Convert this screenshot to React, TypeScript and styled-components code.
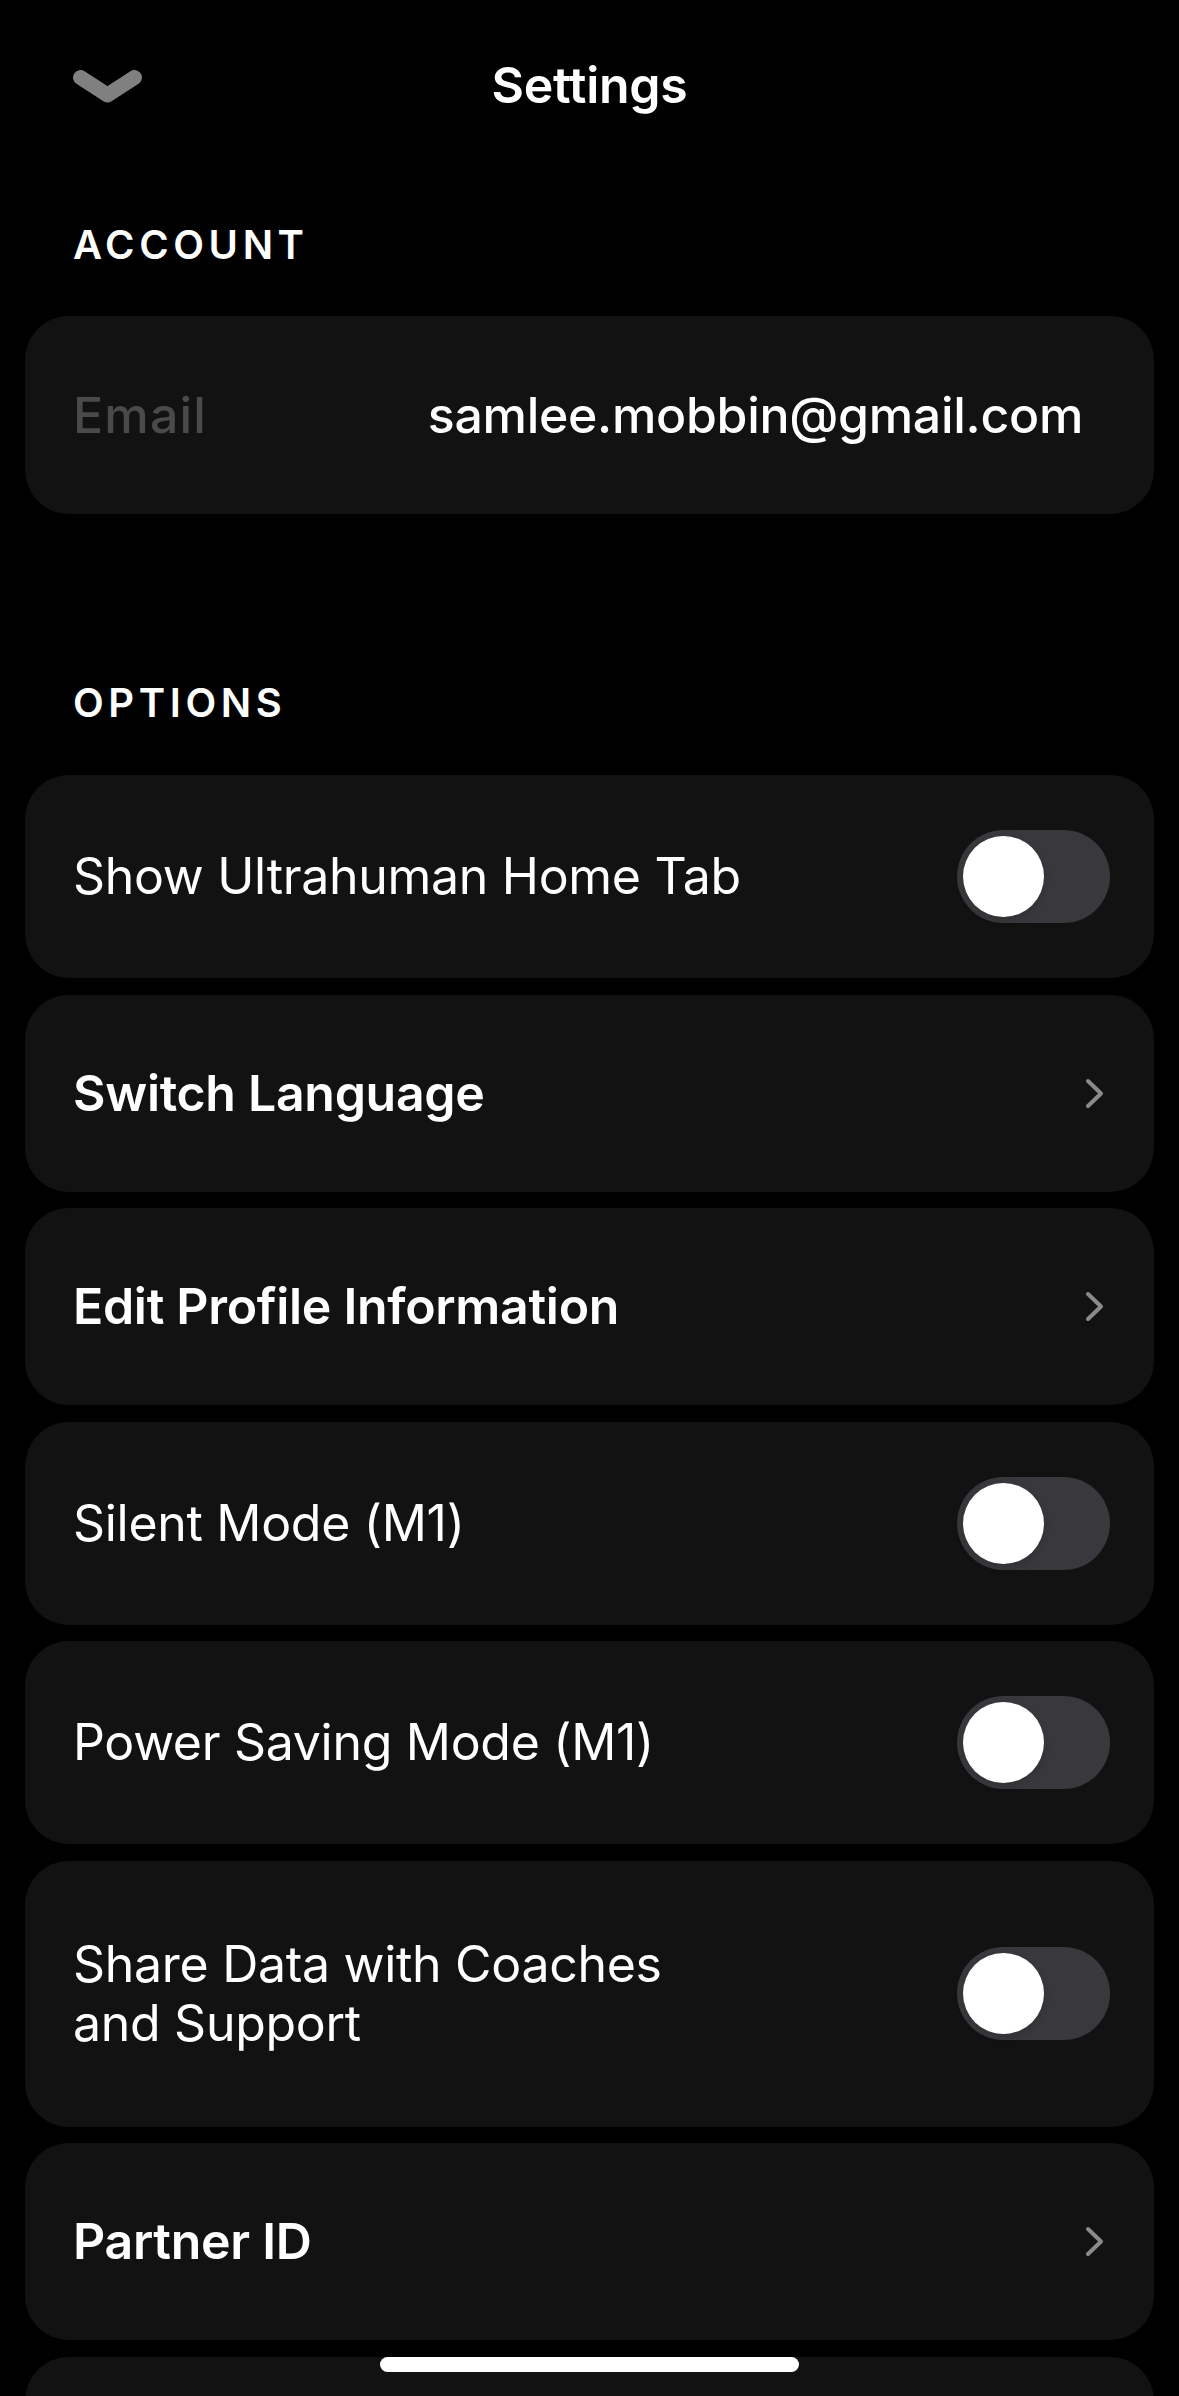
import React from "react";
import styled, { createGlobalStyle } from "styled-components";

const GlobalStyle = createGlobalStyle`
  html, body {
    margin: 0;
    padding: 0;
    background: #000;
  }
  body {
    font-family: Inter, "Noto Sans", "Liberation Sans", sans-serif;
    color: #fff;
    -webkit-font-smoothing: antialiased;
  }
`;

const Screen = styled.div`
  width: 1179px;
  min-height: 2396px;
  background: #000;
  display: flex;
  flex-direction: column;
  box-sizing: border-box;
  padding: 0 25px;
`;

const Header = styled.header`
  height: 170px;
  display: grid;
  grid-template-columns: 1fr auto 1fr;
  align-items: center;
  padding: 0 48px;
  box-sizing: border-box;
`;

const BackButton = styled.button`
  background: none;
  border: none;
  padding: 0;
  width: 69px;
  height: 34px;
  display: flex;
  align-items: center;
  margin-top: 4px;
`;

const Title = styled.h1`
  margin: 0;
  font-size: 50px;
  font-weight: 600;
  letter-spacing: -0.3px;
  color: #fff;
`;

const SectionLabel = styled.h2<{ $top: number }>`
  margin: ${({ $top }) => $top}px 0 0 48px;
  font-size: 40px;
  line-height: 48px;
  font-weight: 600;
  letter-spacing: 4.6px;
  text-transform: uppercase;
  color: #fff;
`;

const List = styled.div<{ $top: number }>`
  margin-top: ${({ $top }) => $top}px;
  display: flex;
  flex-direction: column;
  gap: 16.5px;
`;

const Card = styled.div<{ $padY: number }>`
  background: #121212;
  border-radius: 44px;
  padding: ${({ $padY }) => $padY}px 44px ${({ $padY }) => $padY}px 48px;
  display: flex;
  align-items: center;
  justify-content: space-between;
  gap: 24px;
`;

const FieldLabel = styled.span`
  font-size: 50px;
  line-height: 60px;
  font-weight: 500;
  color: #4a4a4c;
  letter-spacing: 1.2px;
`;

const FieldValue = styled.span`
  font-size: 50px;
  line-height: 60px;
  font-weight: 500;
  color: #fff;
  letter-spacing: -0.3px;
  margin-right: 27px;
`;

const RowText = styled.span<{ $bold?: boolean }>`
  font-size: 50px;
  line-height: 59px;
  font-weight: ${({ $bold }) => ($bold ? 600 : 400)};
  letter-spacing: -0.3px;
  color: #fff;
  white-space: pre-line;
`;

const Track = styled.div<{ $on?: boolean }>`
  flex: none;
  width: 153px;
  height: 93px;
  border-radius: 47px;
  background: ${({ $on }) => ($on ? "#34c759" : "#39393d")};
  padding: 6px;
  box-sizing: border-box;
  display: flex;
  justify-content: ${({ $on }) => ($on ? "flex-end" : "flex-start")};
`;

const Knob = styled.div`
  width: 81px;
  height: 81px;
  border-radius: 50%;
  background: #fff;
  box-shadow: 0 3px 8px rgba(0, 0, 0, 0.15);
`;

const ChevronBox = styled.div`
  flex: none;
  width: 19px;
  height: 31px;
  margin-right: 6px;
  display: flex;
`;

const HomeIndicator = styled.div`
  position: fixed;
  left: 380px;
  top: 2357px;
  width: 419px;
  height: 15px;
  border-radius: 8px;
  background: #fff;
`;

const ChevronDown = () => (
  <svg width="69" height="34" viewBox="0 0 69 34">
    <polyline
      points="7.5,7.5 34.5,25 61.5,7.5"
      fill="none"
      stroke="#808080"
      strokeWidth="15"
      strokeLinecap="round"
      strokeLinejoin="round"
    />
  </svg>
);

const ChevronRight = () => (
  <ChevronBox>
    <svg width="19" height="31" viewBox="0 0 19 31">
      <polyline
        points="3,3 16,15.5 3,28"
        fill="none"
        stroke="#8a8a8e"
        strokeWidth="4"
        strokeLinecap="round"
        strokeLinejoin="round"
      />
    </svg>
  </ChevronBox>
);

const Toggle: React.FC<{ on?: boolean }> = ({ on }) => (
  <Track $on={on}>
    <Knob />
  </Track>
);

type Option =
  | { kind: "toggle"; label: string; padY: number }
  | { kind: "link"; label: string };

const options: Option[] = [
  { kind: "toggle", label: "Show Ultrahuman Home Tab", padY: 55 },
  { kind: "link", label: "Switch Language" },
  { kind: "link", label: "Edit Profile Information" },
  { kind: "toggle", label: "Silent Mode (M1)", padY: 55 },
  { kind: "toggle", label: "Power Saving Mode (M1)", padY: 55 },
  { kind: "toggle", label: "Share Data with Coaches\nand Support", padY: 74 },
  { kind: "link", label: "Partner ID" },
  { kind: "link", label: "" },
];

const App: React.FC = () => (
  <>
    <GlobalStyle />
    <Screen>
      <Header>
        <BackButton aria-label="Close">
          <ChevronDown />
        </BackButton>
        <Title>Settings</Title>
        <span />
      </Header>

      <SectionLabel $top={51}>Account</SectionLabel>
      <List $top={47}>
        <Card $padY={69}>
          <FieldLabel>Email</FieldLabel>
          <FieldValue>samlee.mobbin@gmail.com</FieldValue>
        </Card>
      </List>

      <SectionLabel $top={165}>Options</SectionLabel>
      <List $top={48}>
        {options.map((o, i) =>
          o.kind === "toggle" ? (
            <Card key={i} $padY={o.padY}>
              <RowText>{o.label}</RowText>
              <Toggle />
            </Card>
          ) : (
            <Card key={i} $padY={69}>
              <RowText $bold>{o.label}</RowText>
              <ChevronRight />
            </Card>
          )
        )}
      </List>
    </Screen>
    <HomeIndicator />
  </>
);

export default App;
